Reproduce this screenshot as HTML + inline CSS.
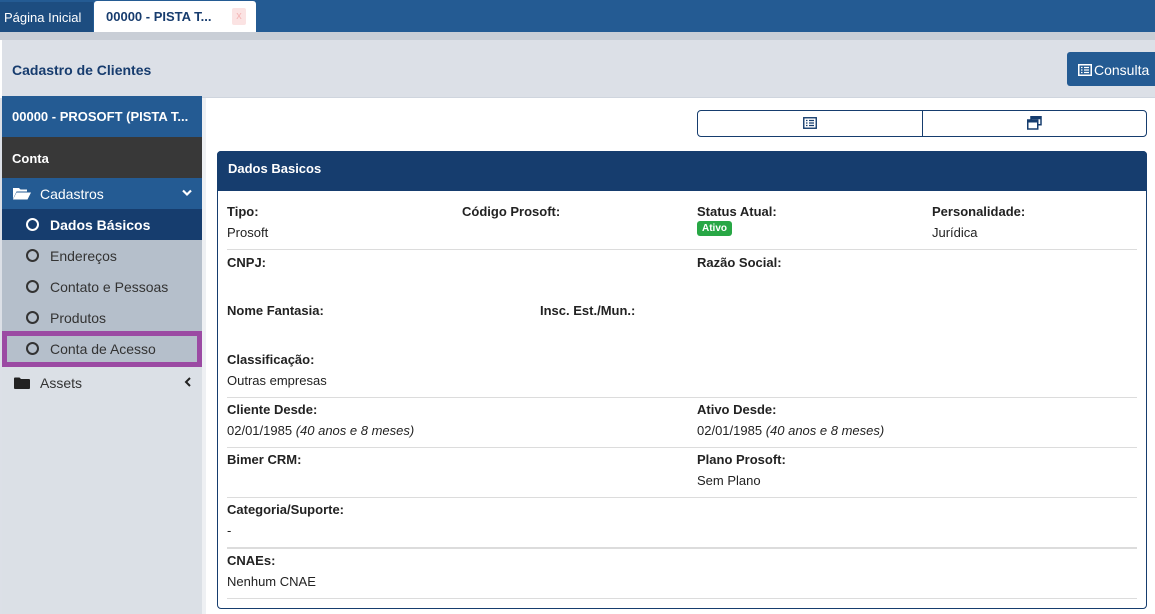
<!DOCTYPE html>
<html><head><meta charset="utf-8"><style>
*{box-sizing:border-box;margin:0;padding:0}
body{width:1155px;height:614px;overflow:hidden;background:#fff;font-family:"Liberation Sans",sans-serif;font-size:13px;color:#222;position:relative}
.a{position:absolute}
.lab{position:absolute;font-weight:bold;font-size:13px;color:#222}
.val{position:absolute;font-size:13px;color:#222}
.hr{position:absolute;left:227px;width:910px;height:1px;background:#dcdcdc}
.side{position:absolute;left:2px;width:200px;color:#fff;font-size:13px}
.circ{position:absolute;left:24px;width:13px;height:13px;border:2.2px solid #333;border-radius:50%}
</style></head><body>
<div class="a" style="left:0;top:0;width:1155px;height:32px;background:#245b93"></div>
<div class="a" style="left:0;top:2px;width:93px;height:30px;background:#1d4d80;color:#fff;padding:8px 0 0 4px;font-size:13px">Página Inicial</div>
<div class="a" style="left:94px;top:1px;width:162px;height:31px;background:#fff;border-radius:3px 3px 0 0;padding:8px 0 0 12px;font-weight:bold;color:#173c6e;font-size:13px">00000 - PISTA T...</div>
<div class="a" style="left:232px;top:8px;width:14px;height:17px;background:#fbe3e3;border-radius:2px;color:#f4b5b5;font-size:11px;text-align:center;line-height:17px">x</div>
<div class="a" style="left:0;top:32px;width:1155px;height:8px;background:#c9ced6"></div>
<div class="a" style="left:2px;top:40px;width:1153px;height:58px;background:#dce0e7;border-bottom:1px solid #cfd5de"></div>
<div class="a" style="left:12px;top:62px;font-weight:bold;color:#173c6e;font-size:14px">Cadastro de Clientes</div>
<div class="a" style="left:1067px;top:52px;width:88px;height:34px;background:#245b93;border-radius:3px 0 0 3px;color:#fff;padding:10px 0 0 11px;font-size:14px">
<svg width="14" height="12" style="vertical-align:-1px;margin-right:2px" viewBox="0 0 14 12"><rect x="0.75" y="0.75" width="12.5" height="10.5" fill="none" stroke="#fff" stroke-width="1.5"/><path d="M3 3.5h1.5M3 6h1.5M3 8.5h1.5M6 3.5h5M6 6h5M6 8.5h5" stroke="#fff" stroke-width="1.3"/></svg>Consulta</div>
<div class="a" style="left:0;top:98px;width:2px;height:516px;background:#dce0e7"></div>
<div class="a" style="left:2px;top:96px;width:200px;height:518px;background:#dbe0e6"></div>
<div class="a" style="left:202px;top:98px;width:4px;height:516px;background:#eef0f3"></div>
<div class="side" style="top:96px;height:41px;background:#245b93;font-weight:bold;padding:13px 0 0 10px">00000 - PROSOFT (PISTA T...</div>
<div class="side" style="top:137px;height:41px;background:#383838;font-weight:bold;padding:14px 0 0 10px">Conta</div>
<div class="side" style="top:178px;height:31px;background:#245b93;padding:8px 0 0 38px;font-size:14px">Cadastros
<svg class="a" style="left:11px;top:9px" width="18" height="13" viewBox="0 0 18 13"><path d="M0 1h6l1.5 1.5H14v2H3.5L0 12z" fill="#fff"/><path d="M3.5 5.5H18L14.5 12.5H0z" fill="#fff"/></svg>
<svg class="a" style="left:180px;top:11px" width="10" height="8" viewBox="0 0 10 8"><path d="M1 1.5l4 4 4-4" stroke="#fff" stroke-width="2.2" fill="none"/></svg></div>
<div class="side" style="top:209px;height:31px;background:#163d6e;font-weight:bold;padding:8px 0 0 48px;font-size:14px">Dados Básicos<div class="circ" style="top:9px;border-color:#fff"></div></div>
<div class="side" style="top:240px;height:93px;background:#b5bfcb"></div>
<div class="side" style="top:240px;height:31px;color:#333;padding:8px 0 0 48px;font-size:14px">Endereços<div class="circ" style="top:9px"></div></div>
<div class="side" style="top:271px;height:31px;color:#333;padding:8px 0 0 48px;font-size:14px">Contato e Pessoas<div class="circ" style="top:9px"></div></div>
<div class="side" style="top:302px;height:31px;color:#333;padding:8px 0 0 48px;font-size:14px">Produtos<div class="circ" style="top:9px"></div></div>
<div class="side" style="top:331px;height:36px;background:#b5bfcb;border:5px solid #9b4aa3;color:#333;padding:5px 0 0 43px;font-size:14px">Conta de Acesso<div class="circ" style="top:6px;left:19px"></div></div>
<div class="side" style="top:367px;height:32px;color:#333;padding:8px 0 0 38px;font-size:14px">Assets
<svg class="a" style="left:12px;top:10px" width="16" height="12" viewBox="0 0 16 12"><path d="M0 1.5Q0 0.5 1 0.5h4.5l1.5 1.5h8q1 0 1 1V11q0 1-1 1H1q-1 0-1-1z" fill="#222"/></svg>
<svg class="a" style="left:182px;top:10px" width="8" height="10" viewBox="0 0 8 10"><path d="M6 1L2 5l4 4" stroke="#222" stroke-width="2" fill="none"/></svg></div>

<div class="a" style="left:697px;top:110px;width:450px;height:27px;border:1px solid #163d6e;border-radius:4px"></div>
<div class="a" style="left:922px;top:110px;width:1px;height:27px;background:#163d6e"></div>
<svg class="a" style="left:803px;top:117px" width="14" height="12" viewBox="0 0 14 12"><rect x="0.75" y="0.75" width="12.5" height="10.5" fill="none" stroke="#163d6e" stroke-width="1.4"/><path d="M3 3.5h1.5M3 6h1.5M3 8.5h1.5M6 3.5h5M6 6h5M6 8.5h5" stroke="#163d6e" stroke-width="1.2"/></svg>
<svg class="a" style="left:1027px;top:116px" width="15" height="14" viewBox="0 0 15 14"><rect x="4" y="0.75" width="10" height="8" fill="none" stroke="#163d6e" stroke-width="1.5"/><rect x="0.75" y="4" width="10" height="9" fill="#fff" stroke="#163d6e" stroke-width="1.5"/><rect x="0.75" y="4" width="10" height="2.5" fill="#163d6e"/><rect x="4" y="0.75" width="10" height="2.5" fill="#163d6e"/></svg>

<div class="a" style="left:217px;top:151px;width:930px;height:458px;border:1px solid #163d6e;border-radius:4px"></div>
<div class="a" style="left:217px;top:151px;width:930px;height:40px;background:#163d6e;border-radius:4px 4px 0 0;color:#fff;font-weight:bold;padding:10px 0 0 11px">Dados Basicos</div>

<div class="lab" style="left:227px;top:204px">Tipo:</div><div class="val" style="left:227px;top:225px">Prosoft</div>
<div class="lab" style="left:462px;top:204px">Código Prosoft:</div>
<div class="lab" style="left:697px;top:204px">Status Atual:</div>
<div class="a" style="left:697px;top:221px;width:35px;height:15px;background:#28a745;border-radius:3px;color:#fff;font-size:10px;font-weight:bold;text-align:center;line-height:15px">Ativo</div>
<div class="lab" style="left:932px;top:204px">Personalidade:</div><div class="val" style="left:932px;top:225px">Jurídica</div>
<div class="hr" style="top:249px"></div>
<div class="lab" style="left:227px;top:255px">CNPJ:</div>
<div class="lab" style="left:697px;top:255px">Razão Social:</div>
<div class="lab" style="left:227px;top:303px">Nome Fantasia:</div>
<div class="lab" style="left:540px;top:303px">Insc. Est./Mun.:</div>
<div class="lab" style="left:227px;top:352px">Classificação:</div><div class="val" style="left:227px;top:373px">Outras empresas</div>
<div class="hr" style="top:397px"></div>
<div class="lab" style="left:227px;top:402px">Cliente Desde:</div><div class="val" style="left:227px;top:423px">02/01/1985 <i>(40 anos e 8 meses)</i></div>
<div class="lab" style="left:697px;top:402px">Ativo Desde:</div><div class="val" style="left:697px;top:423px">02/01/1985 <i>(40 anos e 8 meses)</i></div>
<div class="hr" style="top:447px"></div>
<div class="lab" style="left:227px;top:452px">Bimer CRM:</div>
<div class="lab" style="left:697px;top:452px">Plano Prosoft:</div><div class="val" style="left:697px;top:473px">Sem Plano</div>
<div class="hr" style="top:497px"></div>
<div class="lab" style="left:227px;top:502px">Categoria/Suporte:</div><div class="val" style="left:227px;top:523px">-</div>
<div class="hr" style="top:547px;height:2px"></div>
<div class="lab" style="left:227px;top:553px">CNAEs:</div><div class="val" style="left:227px;top:574px">Nenhum CNAE</div>
<div class="hr" style="top:598px"></div>
</body></html>
